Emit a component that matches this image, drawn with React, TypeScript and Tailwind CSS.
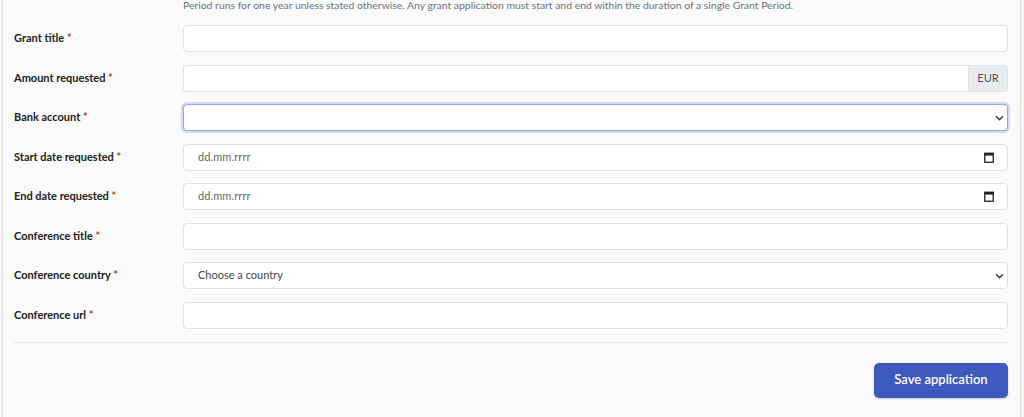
import React from 'react';

// Field definitions for the grant application form
type FieldKind = 'text' | 'amount' | 'select' | 'date';

interface Field {
  id: string;
  label: string;
  kind: FieldKind;
  placeholder?: string;
  focused?: boolean;
}

const fields: Field[] = [
  { id: 'grantTitle', label: 'Grant title', kind: 'text' },
  { id: 'amount', label: 'Amount requested', kind: 'amount' },
  { id: 'bankAccount', label: 'Bank account', kind: 'select', focused: true },
  { id: 'startDate', label: 'Start date requested', kind: 'date' },
  { id: 'endDate', label: 'End date requested', kind: 'date' },
  { id: 'conferenceTitle', label: 'Conference title', kind: 'text' },
  { id: 'conferenceCountry', label: 'Conference country', kind: 'select', placeholder: 'Choose a country' },
  { id: 'conferenceUrl', label: 'Conference url', kind: 'text' },
];

const Chevron = () => (
  <svg width="9" height="6" viewBox="0 0 9 6" className="shrink-0">
    <path d="M1 1.2 4.5 4.6 8 1.2" fill="none" stroke="#444" strokeWidth="1.5" />
  </svg>
);

const CalendarIcon = () => (
  <svg width="10" height="11" viewBox="0 0 10 11" className="shrink-0">
    <rect x="0.75" y="1.25" width="8.5" height="9" fill="none" stroke="#222" strokeWidth="1.3" />
    <rect x="0.5" y="1" width="9" height="2.6" fill="#222" />
  </svg>
);

const FieldControl = ({ field }: { field: Field }) => {
  const base = 'h-[27px] w-full rounded-[4px] border bg-white';

  if (field.kind === 'amount') {
    return (
      <div className="flex h-[27px] w-full">
        <div className="flex-1 rounded-l-[4px] border border-r-0 border-[#dfe2e6] bg-white" />
        <div className="flex w-[40px] items-center justify-center rounded-r-[4px] border border-[#dfe2e6] bg-[#e9ecef] text-[11px] text-[#555]">
          EUR
        </div>
      </div>
    );
  }

  if (field.kind === 'select') {
    return (
      <div
        className={`${base} flex items-center justify-between pl-[14px] pr-[3px] ${
          field.focused
            ? 'border-[#98a6e6] shadow-[0_0_0_2px_rgba(120,140,225,0.3)]'
            : 'border-[#dfe2e6]'
        }`}
      >
        <span className="text-[11px] text-[#444]">{field.placeholder ?? ''}</span>
        <Chevron />
      </div>
    );
  }

  if (field.kind === 'date') {
    return (
      <div className={`${base} flex items-center justify-between border-[#dfe2e6] pl-[14px] pr-[13px]`}>
        <span className="text-[11px] tracking-[0.1px] text-[#666]">dd.mm.rrrr</span>
        <CalendarIcon />
      </div>
    );
  }

  return <div className={`${base} border-[#dfe2e6]`} />;
};

export default function App() {
  return (
    <div className="min-h-[417px] w-full bg-[#f8f8f8] pl-[2px] pr-[3px] font-['Lato',sans-serif]">
      <div className="min-h-[417px] border-x border-[#e2e2e2] bg-[#fafafa] pl-[11px] pr-[12px]">
        {/* Tail of the grant period note */}
        <p className="pl-[169px] text-[10.4px] leading-[11px] text-[#6c7683]">
          Period runs for one year unless stated otherwise. Any grant application must start and end within the duration of a single Grant Period.
        </p>

        <div className="mt-[14px] flex flex-col gap-[12.5px]">
          {fields.map((field) => (
            <div key={field.id} className="flex items-center">
              <label className="w-[169px] shrink-0 text-[11px] font-bold text-[#222]">
                {field.label} <span className="text-[#c0392b]">*</span>
              </label>
              <FieldControl field={field} />
            </div>
          ))}
        </div>

        <div className="mt-[13px] border-t border-[#e4e4e4]" />

        <div className="mt-[20px] flex justify-end">
          <button
            type="button"
            className="h-[35px] w-[134px] rounded-[5px] bg-[#3d59bd] text-[13px] font-semibold text-white shadow-[0_1px_2px_rgba(0,0,0,0.2)]"
          >
            Save application
          </button>
        </div>
      </div>
    </div>
  );
}
